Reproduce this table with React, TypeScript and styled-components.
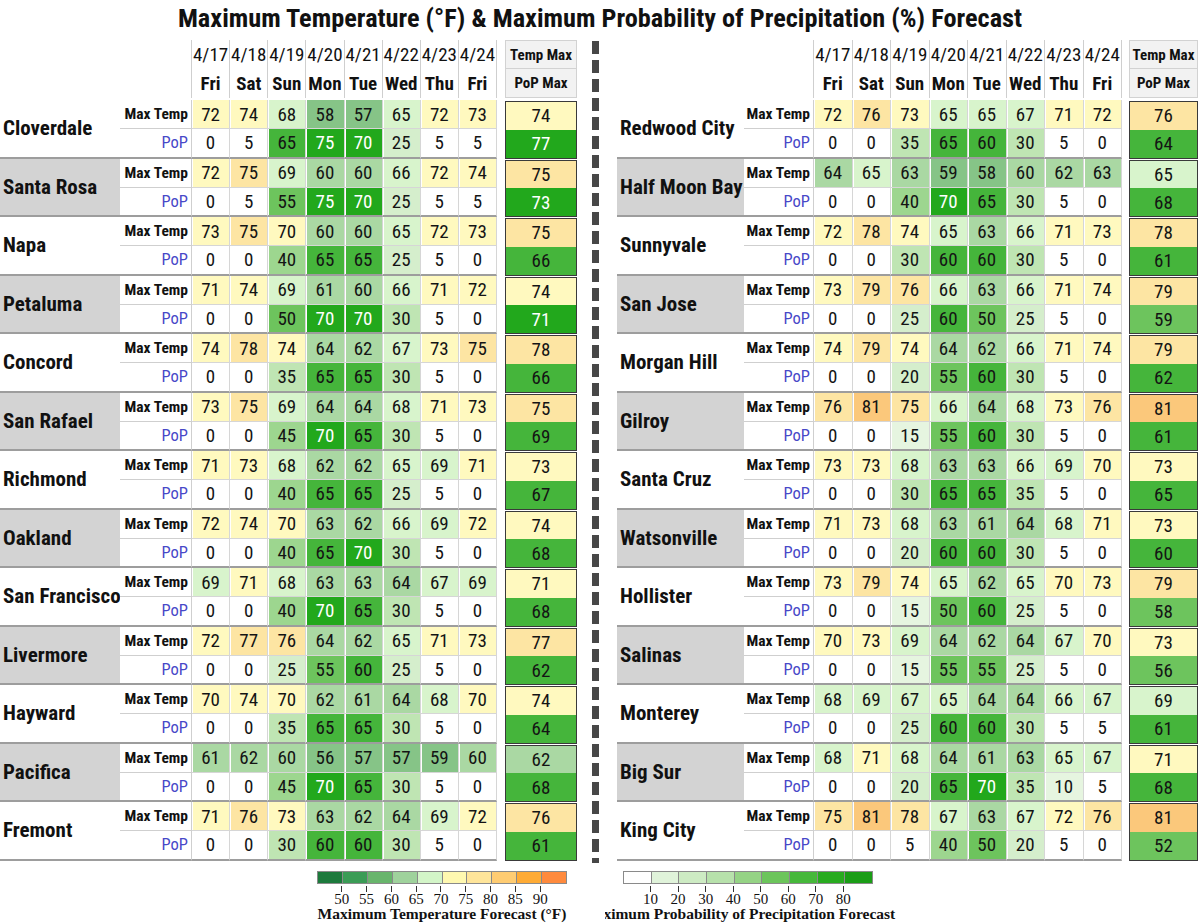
import React from "react";
import styled, { createGlobalStyle } from "styled-components";

const GlobalStyle = createGlobalStyle`
  html, body { margin: 0; padding: 0; background: #fff; }
  body {
    font-family: "Roboto Condensed", Roboto, "Liberation Sans", sans-serif;
    font-stretch: condensed;
    color: #111;
  }
`;

type City = { name: string; t: number[]; p: number[]; tmax: number; pmax: number };

const DAYS: [string, string][] = [
  ["4/17", "Fri"],
  ["4/18", "Sat"],
  ["4/19", "Sun"],
  ["4/20", "Mon"],
  ["4/21", "Tue"],
  ["4/22", "Wed"],
  ["4/23", "Thu"],
  ["4/24", "Fri"],
];

const c = (name: string, t: number[], tmax: number, p: number[], pmax: number): City => ({
  name,
  t,
  p,
  tmax,
  pmax,
});

const LEFT: City[] = [
  c("Cloverdale", [72, 74, 68, 58, 57, 65, 72, 73], 74, [0, 5, 65, 75, 70, 25, 5, 5], 77),
  c("Santa Rosa", [72, 75, 69, 60, 60, 66, 72, 74], 75, [0, 5, 55, 75, 70, 25, 5, 5], 73),
  c("Napa", [73, 75, 70, 60, 60, 65, 72, 73], 75, [0, 0, 40, 65, 65, 25, 5, 0], 66),
  c("Petaluma", [71, 74, 69, 61, 60, 66, 71, 72], 74, [0, 0, 50, 70, 70, 30, 5, 0], 71),
  c("Concord", [74, 78, 74, 64, 62, 67, 73, 75], 78, [0, 0, 35, 65, 65, 30, 5, 0], 66),
  c("San Rafael", [73, 75, 69, 64, 64, 68, 71, 73], 75, [0, 0, 45, 70, 65, 30, 5, 0], 69),
  c("Richmond", [71, 73, 68, 62, 62, 65, 69, 71], 73, [0, 0, 40, 65, 65, 25, 5, 0], 67),
  c("Oakland", [72, 74, 70, 63, 62, 66, 69, 72], 74, [0, 0, 40, 65, 70, 30, 5, 0], 68),
  c("San Francisco", [69, 71, 68, 63, 63, 64, 67, 69], 71, [0, 0, 40, 70, 65, 30, 5, 0], 68),
  c("Livermore", [72, 77, 76, 64, 62, 65, 71, 73], 77, [0, 0, 25, 55, 60, 25, 5, 0], 62),
  c("Hayward", [70, 74, 70, 62, 61, 64, 68, 70], 74, [0, 0, 35, 65, 65, 30, 5, 0], 64),
  c("Pacifica", [61, 62, 60, 56, 57, 57, 59, 60], 62, [0, 0, 45, 70, 65, 30, 5, 0], 68),
  c("Fremont", [71, 76, 73, 63, 62, 64, 69, 72], 76, [0, 0, 30, 60, 60, 30, 5, 0], 61),
];

const RIGHT: City[] = [
  c("Redwood City", [72, 76, 73, 65, 65, 67, 71, 72], 76, [0, 0, 35, 65, 60, 30, 5, 0], 64),
  c("Half Moon Bay", [64, 65, 63, 59, 58, 60, 62, 63], 65, [0, 0, 40, 70, 65, 30, 5, 0], 68),
  c("Sunnyvale", [72, 78, 74, 65, 63, 66, 71, 73], 78, [0, 0, 30, 60, 60, 30, 5, 0], 61),
  c("San Jose", [73, 79, 76, 66, 63, 66, 71, 74], 79, [0, 0, 25, 60, 50, 25, 5, 0], 59),
  c("Morgan Hill", [74, 79, 74, 64, 62, 66, 71, 74], 79, [0, 0, 20, 55, 60, 30, 5, 0], 62),
  c("Gilroy", [76, 81, 75, 66, 64, 68, 73, 76], 81, [0, 0, 15, 55, 60, 30, 5, 0], 61),
  c("Santa Cruz", [73, 73, 68, 63, 63, 66, 69, 70], 73, [0, 0, 30, 65, 65, 35, 5, 0], 65),
  c("Watsonville", [71, 73, 68, 63, 61, 64, 68, 71], 73, [0, 0, 20, 60, 60, 30, 5, 0], 60),
  c("Hollister", [73, 79, 74, 65, 62, 65, 70, 73], 79, [0, 0, 15, 50, 60, 25, 5, 0], 58),
  c("Salinas", [70, 73, 69, 64, 62, 64, 67, 70], 73, [0, 0, 15, 55, 55, 25, 5, 0], 56),
  c("Monterey", [68, 69, 67, 65, 64, 64, 66, 67], 69, [0, 0, 25, 60, 60, 30, 5, 5], 61),
  c("Big Sur", [68, 71, 68, 64, 61, 63, 65, 67], 71, [0, 0, 20, 65, 70, 35, 10, 5], 68),
  c("King City", [75, 81, 78, 67, 63, 67, 72, 76], 81, [0, 0, 5, 40, 50, 20, 5, 0], 52),
];

const TEMP_CELL = [
  [50, "#4ea865"],
  [55, "#5fb267"],
  [60, "#86c487"],
  [65, "#aad8a3"],
  [70, "#d8f4cc"],
  [75, "#fff9bf"],
  [80, "#fde5a3"],
  [85, "#fbc87b"],
  [90, "#fcae45"],
] as const;

function tempColor(v: number): string {
  for (const [lim, col] of TEMP_CELL) if (v < lim) return col;
  return "#fd8c40";
}

function popColor(v: number): string {
  if (v < 10) return "#ffffff";
  if (v < 20) return "#e6f5e0";
  if (v < 30) return "#d5eecc";
  if (v < 40) return "#bfe5b3";
  if (v < 50) return "#9dd68f";
  if (v < 60) return "#6dc45d";
  if (v < 70) return "#45b53b";
  if (v < 80) return "#22a81c";
  return "#189a14";
}

const TEMP_LEGEND = [
  "#1d7a3c",
  "#3b9c56",
  "#68b56c",
  "#9fd29c",
  "#d3f5c8",
  "#fff8b0",
  "#ffe59a",
  "#ffcc72",
  "#ffab35",
  "#ff8a3d",
];
const POP_LEGEND = [
  "#ffffff",
  "#e0f3da",
  "#cdebc3",
  "#b7e1ab",
  "#95d385",
  "#6cc55b",
  "#46b83a",
  "#28ab1f",
  "#1a9d16",
];

const LEFT_COLS = "120px 72px repeat(8, 38.125px) 8px 72px";
const RIGHT_COLS = "127px 70px repeat(8, 38.5px) 7px 69px";

/* ---------- page ---------- */

const Page = styled.div`
  width: 1200px;
  height: 924px;
  overflow: hidden;
  background: #fff;
`;

const Title = styled.h1`
  margin: 0;
  height: 40px;
  line-height: 36px;
  font-size: 26.3px;
  font-weight: 700;
  text-align: center;
  color: #111;
`;

const Main = styled.div`
  display: flex;
  align-items: flex-start;
`;

const Panel = styled.div<{ $w: number }>`
  width: ${(p) => p.$w}px;
  display: flex;
  flex-direction: column;
`;

const Divider = styled.div`
  width: 7px;
  height: 822px;
  margin: 1px 18px 0 15px;
  background: repeating-linear-gradient(to bottom, #474747 0 13px, transparent 13px 19px);
`;

/* ---------- table ---------- */

const Grid = styled.div<{ $cols: string }>`
  display: grid;
  grid-template-columns: ${(p) => p.$cols};
`;

const HeadGrid = styled(Grid)`
  grid-template-rows: 29px 29px;
  margin-bottom: 2px;
`;

const HeadBlank = styled.div`
  grid-column: 1 / span 2;
  grid-row: 1 / span 2;
  border-right: 1px solid #cfcfcf;
`;

const HeadCell = styled.div<{ $row: number; $bold?: boolean }>`
  grid-row: ${(p) => p.$row};
  display: flex;
  align-items: center;
  justify-content: center;
  font-size: 19px;
  font-weight: ${(p) => (p.$bold ? 700 : 400)};
  border-right: 1px solid #cfcfcf;
  white-space: nowrap;
  overflow: visible;
`;

const HeadSpacer = styled.div`
  grid-row: 1 / span 2;
`;

const SumHead = styled.div<{ $row: number }>`
  grid-row: ${(p) => p.$row};
  display: flex;
  align-items: center;
  justify-content: center;
  font-size: 15px;
  font-weight: 700;
  white-space: nowrap;
  background: #f2f2f2;
  border: 1px solid #d2d2d2;
  border-top-width: ${(p) => (p.$row === 1 ? 1 : 0)}px;
`;

const Block = styled(Grid)`
  grid-template-rows: 29.25px 29.25px;
`;

const NameCell = styled.div<{ $alt: boolean }>`
  grid-row: 1 / span 2;
  grid-column: 1;
  display: flex;
  align-items: center;
  padding-left: 3px;
  font-size: 21px;
  font-weight: 700;
  white-space: nowrap;
  background: ${(p) => (p.$alt ? "#d3d3d3" : "#ffffff")};
  border-bottom: 2px solid #9d9d9d;
`;

const LabelCell = styled.div<{ $pop?: boolean }>`
  grid-column: 2;
  display: flex;
  align-items: center;
  justify-content: flex-end;
  padding-right: 3px;
  font-size: ${(p) => (p.$pop ? 16.5 : 15.5)}px;
  font-weight: ${(p) => (p.$pop ? 400 : 700)};
  white-space: nowrap;
  color: ${(p) => (p.$pop ? "#4848c8" : "#111")};
  background: #fff;
  border-right: 1px solid #cfcfcf;
  border-bottom: ${(p) => (p.$pop ? "2px solid #9d9d9d" : "1px solid #cfcfcf")};
`;

const ValCell = styled.div<{ $bg: string; $light?: boolean; $pop?: boolean }>`
  display: flex;
  align-items: center;
  justify-content: center;
  font-size: 19px;
  color: ${(p) => (p.$light ? "#ffffff" : "#141414")};
  background: ${(p) => p.$bg};
  border-right: 1px solid #d6d6d6;
  box-shadow: inset 1px 0 0 #ffffff;
  border-bottom: ${(p) => (p.$pop ? "2px solid #9d9d9d" : "1px solid #d6d6d6")};
`;

const SpacerCell = styled.div`
  grid-row: 1 / span 2;
  background: #fff;
`;

const SumBox = styled.div`
  grid-row: 1 / span 2;
  display: grid;
  grid-template-rows: 1fr 1fr;
  margin-top: 1px;
  border: 1px solid #3a3a3a;
`;

const SumCell = styled.div<{ $bg: string; $light?: boolean }>`
  display: flex;
  align-items: center;
  justify-content: center;
  font-size: 19px;
  color: ${(p) => (p.$light ? "#ffffff" : "#141414")};
  background: ${(p) => p.$bg};
`;

/* ---------- legend ---------- */

const LegendRow = styled.div`
  display: flex;
  align-items: flex-start;
  margin-top: 8px;
`;

const LegendBlock = styled.div<{ $ml: number; $w: number }>`
  margin-left: ${(p) => p.$ml}px;
  width: ${(p) => p.$w}px;
  display: flex;
  flex-direction: column;
  font-family: "Liberation Serif", "Times New Roman", serif;
  font-stretch: normal;
  color: #111;
`;

const Bar = styled.div`
  display: flex;
  height: 11px;
  border: 1px solid #8a8a8a;
`;

const Swatch = styled.div<{ $c: string }>`
  flex: 1;
  background: ${(p) => p.$c};
  & + & {
    border-left: 1px solid #8a8a8a;
  }
`;

const TickRow = styled.div<{ $sw: number }>`
  display: flex;
  padding-left: ${(p) => p.$sw / 2}px;
  height: 8px;
  padding-top: 2px;
  box-sizing: border-box;
`;

const Tick = styled.div<{ $sw: number }>`
  width: ${(p) => p.$sw}px;
  display: flex;
  justify-content: center;
  &::before {
    content: "";
    width: 1px;
    height: 6px;
    background: #333;
  }
`;

const LabelRow = styled.div<{ $sw: number }>`
  display: flex;
  padding-left: ${(p) => p.$sw / 2}px;
  height: 14px;
  line-height: 14px;
  font-size: 15px;
`;

const TickLabel = styled.div<{ $sw: number }>`
  width: ${(p) => p.$sw}px;
  text-align: center;
`;

const LegendTitle = styled.div`
  font-family: "Liberation Serif", "Times New Roman", serif;
  font-stretch: normal;
  font-size: 15.5px;
  font-weight: 700;
  line-height: 16px;
  text-align: center;
  white-space: nowrap;
  color: #111;
`;

const ClipBox = styled.div<{ $ml: number; $w: number }>`
  margin-left: ${(p) => p.$ml}px;
  width: ${(p) => p.$w}px;
  overflow: hidden;
`;

const ShiftedTitle = styled(LegendTitle)`
  text-align: left;
  margin-left: -24px;
`;

/* ---------- components ---------- */

function Table({ cities, cols, width }: { cities: City[]; cols: string; width: number }) {
  return (
    <Panel $w={width}>
      <HeadGrid $cols={cols}>
        <HeadBlank />
        {DAYS.map(([d], i) => (
          <HeadCell key={"d" + i} $row={1} style={{ gridColumn: i + 3 }}>
            {d}
          </HeadCell>
        ))}
        {DAYS.map(([, w], i) => (
          <HeadCell key={"w" + i} $row={2} $bold style={{ gridColumn: i + 3 }}>
            {w}
          </HeadCell>
        ))}
        <HeadSpacer style={{ gridColumn: 11 }} />
        <SumHead $row={1} style={{ gridColumn: 12 }}>
          Temp Max
        </SumHead>
        <SumHead $row={2} style={{ gridColumn: 12 }}>
          PoP Max
        </SumHead>
      </HeadGrid>
      {cities.map((city, ci) => (
        <Block key={city.name} $cols={cols}>
          <NameCell $alt={ci % 2 === 1}>{city.name}</NameCell>
          <LabelCell style={{ gridRow: 1 }}>Max Temp</LabelCell>
          <LabelCell $pop style={{ gridRow: 2 }}>
            PoP
          </LabelCell>
          {city.t.map((v, i) => (
            <ValCell key={"t" + i} $bg={tempColor(v)} style={{ gridRow: 1, gridColumn: i + 3 }}>
              {v}
            </ValCell>
          ))}
          {city.p.map((v, i) => (
            <ValCell
              key={"p" + i}
              $pop
              $bg={popColor(v)}
              $light={v >= 70}
              style={{ gridRow: 2, gridColumn: i + 3 }}
            >
              {v}
            </ValCell>
          ))}
          <SpacerCell style={{ gridColumn: 11 }} />
          <SumBox style={{ gridColumn: 12 }}>
            <SumCell $bg={tempColor(city.tmax)}>{city.tmax}</SumCell>
            <SumCell $bg={popColor(city.pmax)} $light={city.pmax >= 70}>
              {city.pmax}
            </SumCell>
          </SumBox>
        </Block>
      ))}
    </Panel>
  );
}

function Legend({ colors, labels, width }: { colors: string[]; labels: string[]; width: number }) {
  const sw = width / colors.length;
  return (
    <>
      <Bar>
        {colors.map((col, i) => (
          <Swatch key={i} $c={col} />
        ))}
      </Bar>
      <TickRow $sw={sw}>
        {labels.map((l) => (
          <Tick key={l} $sw={sw} />
        ))}
      </TickRow>
      <LabelRow $sw={sw}>
        {labels.map((l) => (
          <TickLabel key={l} $sw={sw}>
            {l}
          </TickLabel>
        ))}
      </LabelRow>
    </>
  );
}

export default function App() {
  return (
    <Page>
      <GlobalStyle />
      <Title>Maximum Temperature (°F) &amp; Maximum Probability of Precipitation (%) Forecast</Title>
      <Main>
        <Table cities={LEFT} cols={LEFT_COLS} width={577} />
        <Divider />
        <Table cities={RIGHT} cols={RIGHT_COLS} width={581} />
      </Main>
      <LegendRow>
        <LegendBlock $ml={317} $w={250}>
          <Legend
            colors={TEMP_LEGEND}
            labels={["50", "55", "60", "65", "70", "75", "80", "85", "90"]}
            width={248}
          />
          <LegendTitle>Maximum Temperature Forecast (°F)</LegendTitle>
        </LegendBlock>
        <ClipBox $ml={38} $w={300}>
          <LegendBlock $ml={18} $w={250}>
            <Legend
              colors={POP_LEGEND}
              labels={["10", "20", "30", "40", "50", "60", "70", "80"]}
              width={248}
            />
          </LegendBlock>
          <ShiftedTitle>Maximum Probability of Precipitation Forecast</ShiftedTitle>
        </ClipBox>
      </LegendRow>
    </Page>
  );
}
